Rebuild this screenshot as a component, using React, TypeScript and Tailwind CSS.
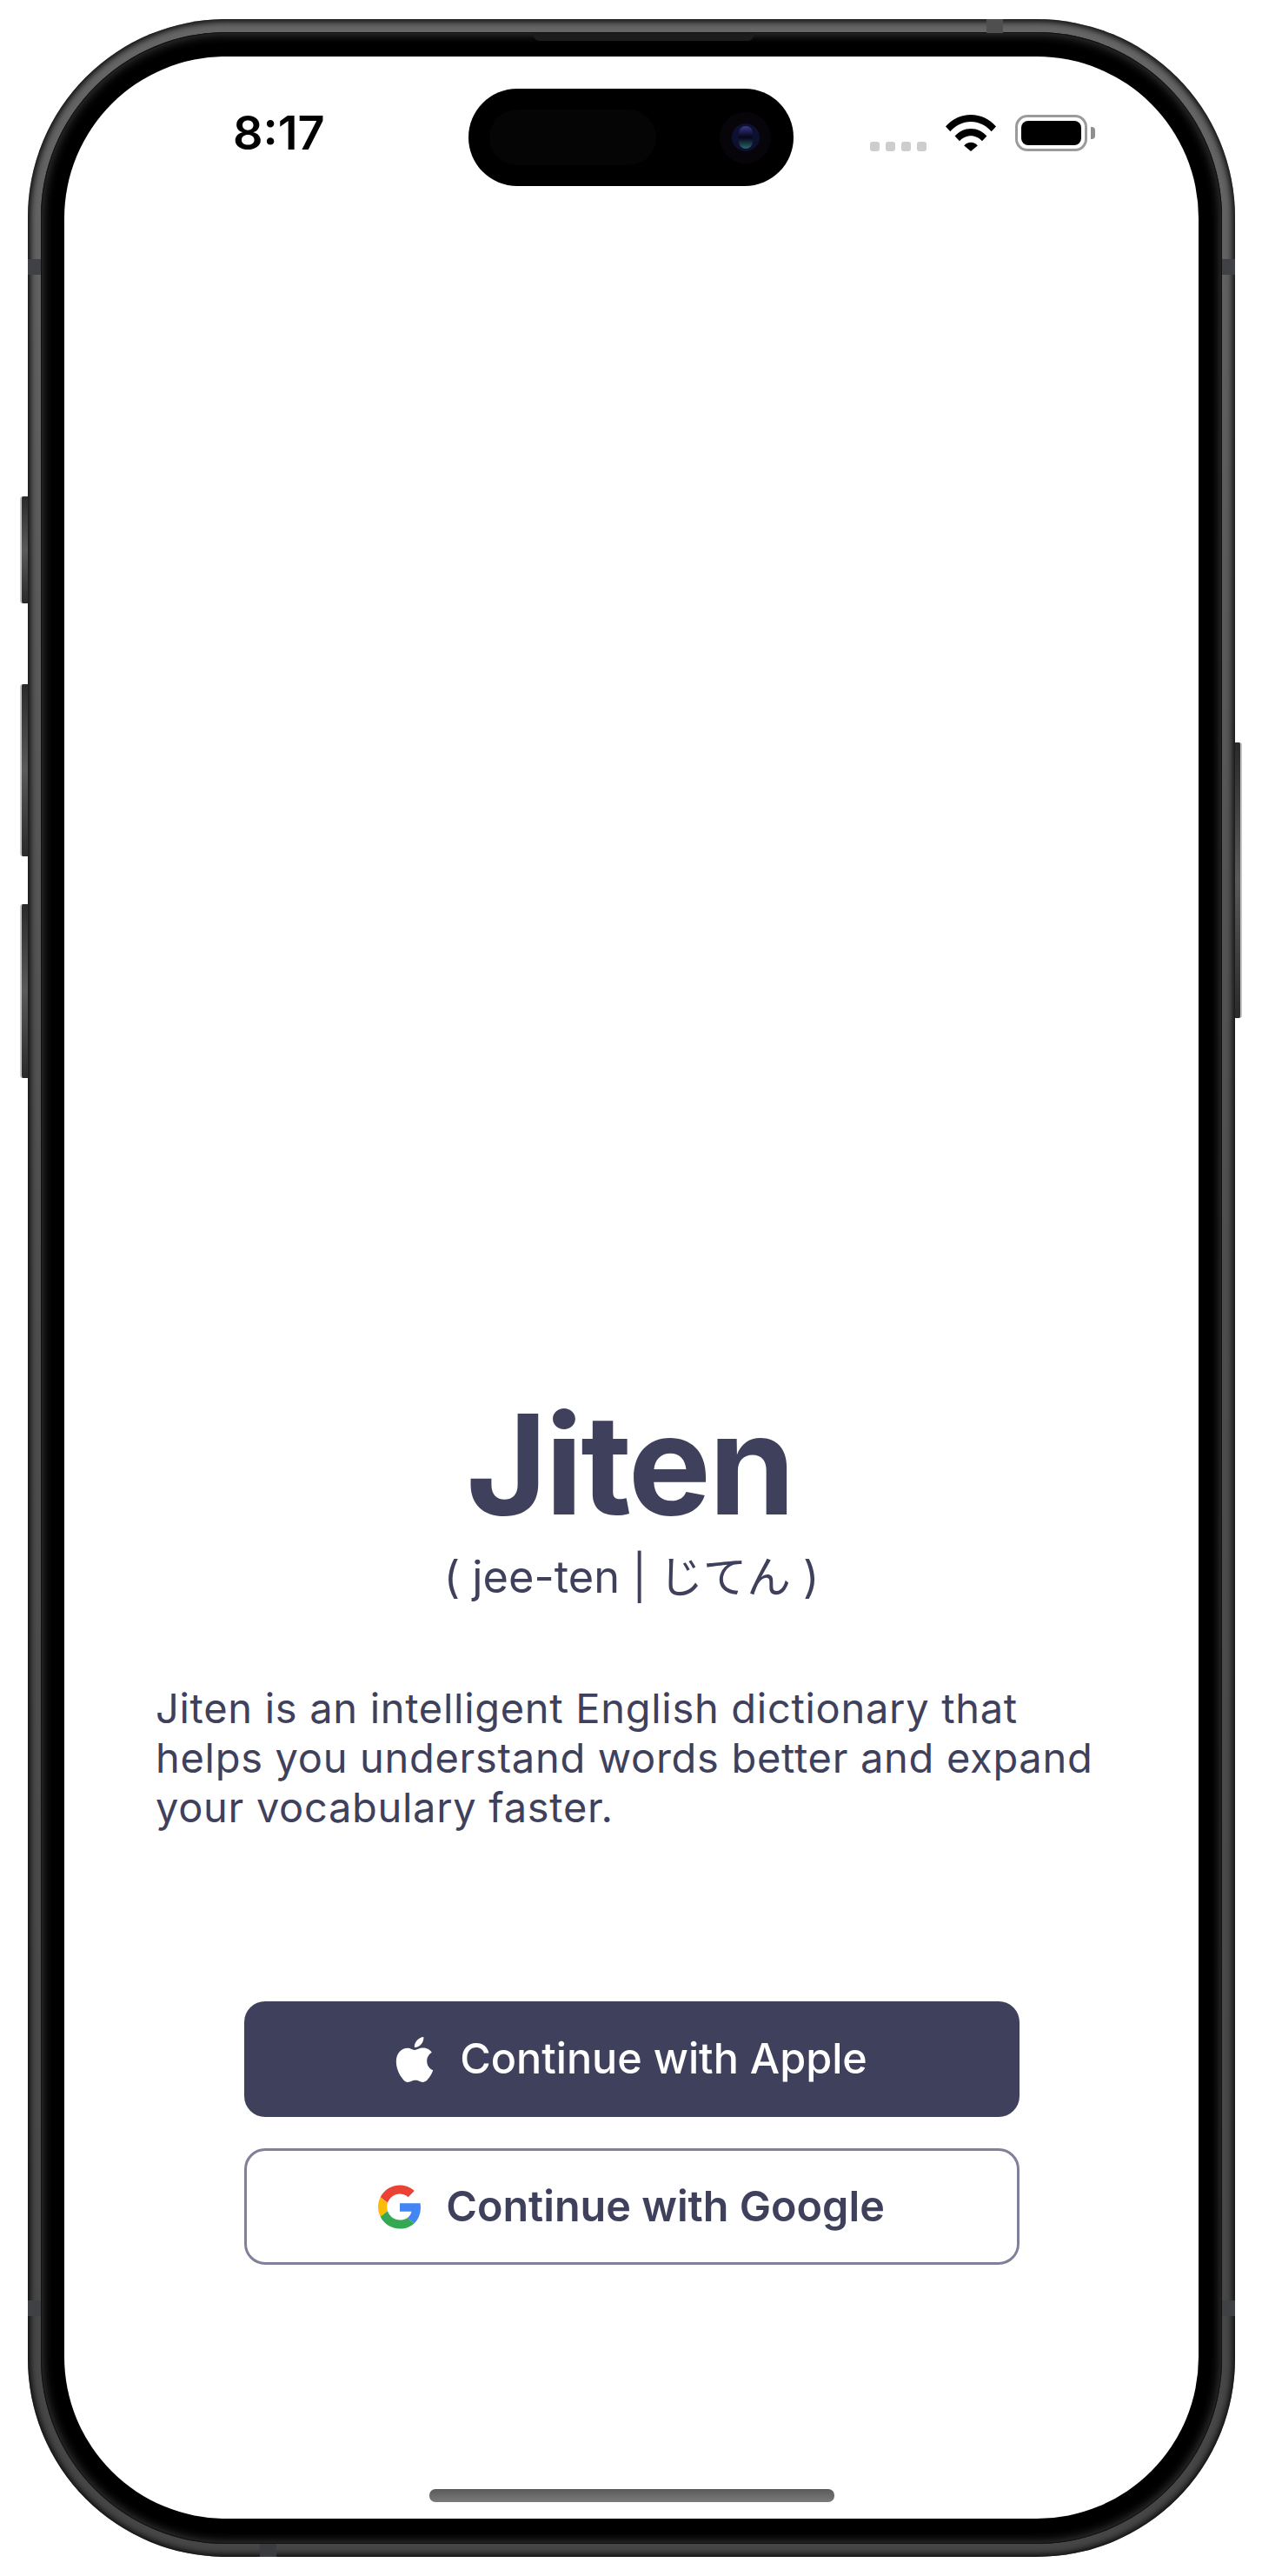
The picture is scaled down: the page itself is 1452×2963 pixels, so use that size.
const textFont = { fontFamily: 'Inter, "Noto Sans CJK JP", sans-serif' };

const WifiIcon = () => (
  <svg width="58" height="42" viewBox="0 0 58 42" className="mt-[-1px]">
    <path d="M0 13.5C7.5 4.8 17.6 0 29 0s21.500 4.800 29 13.500l-5.300 5.700C46.400 12 38.200 7.900 29 7.900S11.600 12 5.300 19.200z" fill="#000" />
    <path d="M10.600 24.600C15.300 19.200 21.800 16 29 16s13.700 3.200 18.400 8.600l-5.400 5.700C38.700 26.500 34.100 24.200 29 24.200s-9.700 2.300-13 6.100z" fill="#000" />
    <path d="M21.200 35.500C23.200 33.100 26 31.800 29 31.800s5.800 1.300 7.800 3.700L29 42z" fill="#000" />
  </svg>
);

const BatteryIcon = () => (
  <div className="flex items-center">
    <div className="w-[83px] h-[42px] rounded-[14px] border-[3px] border-[#9b9b9b] p-[4px] box-border">
      <div className="w-full h-full rounded-[8px] bg-black" />
    </div>
    <div className="ml-[4px] w-[5px] h-[14px] rounded-r-[4px] bg-[#8f8f8f]" />
  </div>
);

const AppleIcon = () => (
  <svg width="44" height="52" viewBox="0 0 814 1000" fill="#fff">
    <path d="M788.100 340.900c-5.800 4.500-108.200 62.200-108.200 190.500 0 148.400 130.300 200.900 134.200 202.200-.6 3.200-20.700 71.900-68.700 141.900-42.800 61.600-87.500 123.100-155.500 123.100s-85.500-39.500-164-39.500c-76.500 0-103.700 40.800-165.900 40.800s-105.600-57-155.500-127C46.700 790.700 0 663 0 541.800c0-194.400 126.400-297.500 250.800-297.500 66.100 0 121.200 43.400 162.700 43.400 39.500 0 101.100-46 176.300-46 28.500 0 130.900 2.600 198.300 99.200zm-234-181.500c31.100-36.900 53.100-88.100 53.100-139.300 0-7.100-.6-14.300-1.900-20.100-50.600 1.900-110.800 33.700-147.100 75.800-28.500 32.400-55.100 83.600-55.100 135.500 0 7.800 1.300 15.600 1.900 18.100 3.200.6 8.400 1.300 13.600 1.300 45.400 0 102.500-30.400 135.500-71.300z" />
  </svg>
);

const GoogleIcon = () => (
  <svg width="50" height="51" viewBox="0 0 48 48">
    <path fill="#EA4335" d="M24 9.500c3.540 0 6.710 1.220 9.210 3.600l6.850-6.850C35.900 2.380 30.470 0 24 0 14.620 0 6.510 5.380 2.560 13.220l7.980 6.190C12.430 13.720 17.740 9.500 24 9.500z" />
    <path fill="#4285F4" d="M46.980 24.550c0-1.570-.15-3.090-.38-4.550H24v9.020h12.940c-.58 2.960-2.260 5.480-4.780 7.180l7.730 6c4.510-4.180 7.090-10.360 7.090-17.650z" />
    <path fill="#FBBC05" d="M10.530 28.590c-.48-1.450-.76-2.990-.76-4.590s.27-3.140.76-4.590l-7.980-6.190C.92 16.460 0 20.120 0 24c0 3.880.92 7.540 2.560 10.780l7.970-6.190z" />
    <path fill="#34A853" d="M24 48c6.480 0 11.930-2.130 15.890-5.810l-7.730-6c-2.150 1.450-4.920 2.300-8.160 2.300-6.260 0-11.570-4.220-13.470-9.910l-7.980 6.190C6.510 42.620 14.620 48 24 48z" />
  </svg>
);

const LeftButton = ({ className }: { className: string }) => (
  <div className={`absolute left-[-9px] w-[9px] rounded-l-[3px] border-l-2 border-l-[#c4c4c4] bg-gradient-to-b from-[#2a2a2a] via-[#5a5a5a] to-[#2a2a2a] ${className}`} />
);

const AntennaBand = ({ className }: { className: string }) => (
  <div className={`absolute ${className}`} />
);

export default function App() {
  return (
    <div className="w-[1452px] h-[2963px] bg-white pt-[22px] pl-[32px]" style={textFont}>
      <div className="relative w-[1389px] h-[2919px]">
        <LeftButton className="top-[549px] h-[123px]" />
        <LeftButton className="top-[765px] h-[198px]" />
        <LeftButton className="top-[1018px] h-[200px]" />
        <div className="absolute right-[-8px] top-[832px] w-[8px] h-[317px] rounded-r-[3px] border-r-2 border-r-[#c4c4c4] bg-gradient-to-b from-[#2a2a2a] via-[#5a5a5a] to-[#2a2a2a]" />

        <div className="w-full h-full rounded-[228px] bg-gradient-to-b from-[#666666] via-[#4e4e4e] to-[#464646] p-[15px] box-border shadow-[inset_0_0_7px_3px_#0c0c0c]">
          <div className="relative w-full h-full rounded-[213px] bg-black px-[27px] pt-[28px] pb-[29px] box-border shadow-[inset_0_0_0_1px_#111,inset_0_0_11px_3px_#363636]">
            <div className="absolute left-[566px] top-[1px] w-[255px] h-[9px] rounded-b-[8px] bg-[#1c1c1c]" />
            <div className="flex flex-col items-center w-full h-full rounded-[186px] bg-white overflow-hidden">
              <div className="relative w-full h-[150px] shrink-0">
                <div className="flex items-center justify-between h-full pl-[194px] pr-[119px] pt-[26px]">
                  <span className="w-[200px] text-[54px] leading-[60px] font-semibold text-black">8:17</span>
                  <div className="flex items-center">
                    <div className="flex gap-[7px] mt-[30px]">
                      <div className="w-[11px] h-[11px] rounded-[3px] bg-[#cdcdcd]" />
                      <div className="w-[11px] h-[11px] rounded-[3px] bg-[#cdcdcd]" />
                      <div className="w-[11px] h-[11px] rounded-[3px] bg-[#cdcdcd]" />
                      <div className="w-[11px] h-[11px] rounded-[3px] bg-[#cdcdcd]" />
                    </div>
                    <div className="ml-[22px]"><WifiIcon /></div>
                    <div className="ml-[22px]"><BatteryIcon /></div>
                  </div>
                </div>
                <div className="absolute left-[465px] top-[37px] w-[374px] h-[112px] rounded-[56px] bg-black flex items-center pl-[24px]">
                  <div className="w-[192px] h-[64px] rounded-[32px] bg-[#050505]" />
                  <div className="ml-[73px] w-[59px] h-[59px] rounded-full bg-[#07050a] flex items-center justify-center">
                    <div className="w-[32px] h-[32px] rounded-full bg-[#0d1030] flex items-center justify-center">
                      <div className="w-[16px] h-[26px] rounded-full bg-gradient-to-b from-[#3a3a8c] via-[#05061a] to-[#2c6a6a]" />
                    </div>
                  </div>
                </div>
              </div>

              <div className="flex-1" />

              <h1 className="mr-[4px] text-[160px] leading-[190px] font-bold text-[#3f415c] tracking-[-2.5px]">Jiten</h1>
              <p className="text-[50.500px] leading-[60px] text-[#3f415c] mt-[5px]">( jee-ten | じてん )</p>

              <p className="self-start ml-[105px] mt-[92px] w-[1150px] text-[47px] leading-[57px] tracking-[0.7px] text-[#3f415c]">
                Jiten is an intelligent English dictionary that<br />
                helps you understand words better and expand<br />
                your vocabulary faster.
              </p>

              <button className="mt-[195px] w-[892px] h-[133px] rounded-[24px] bg-[#3f415c] flex items-center justify-center gap-[30px] text-[48.500px] font-medium text-white">
                <AppleIcon />
                Continue with Apple
              </button>
              <button className="mt-[36px] w-[892px] h-[134px] rounded-[24px] border-[3px] border-[#80809a] bg-white flex items-center justify-center gap-[28px] text-[48.500px] font-semibold text-[#3f415c]">
                <GoogleIcon />
                Continue with Google
              </button>

              <div className="mt-[258px] mb-[19px] w-[466px] h-[15px] rounded-[7px] bg-gradient-to-b from-[#5a5a5a] to-[#7a7a7a]" />
            </div>
          </div>
        </div>

        <AntennaBand className="left-[1103px] top-0 w-[19px] h-[16px] bg-[#4f4f4f]" />
        <AntennaBand className="left-[267px] bottom-0 w-[19px] h-[15px] bg-[#3a3c3f]" />
        <AntennaBand className="left-0 top-[276px] w-[15px] h-[18px] bg-[#3f4144]" />
        <AntennaBand className="right-0 top-[276px] w-[15px] h-[18px] bg-[#3f4144]" />
        <AntennaBand className="left-0 top-[2624px] w-[15px] h-[18px] bg-[#3f4144]" />
        <AntennaBand className="right-0 top-[2624px] w-[15px] h-[18px] bg-[#3f4144]" />
      </div>
    </div>
  );
}
